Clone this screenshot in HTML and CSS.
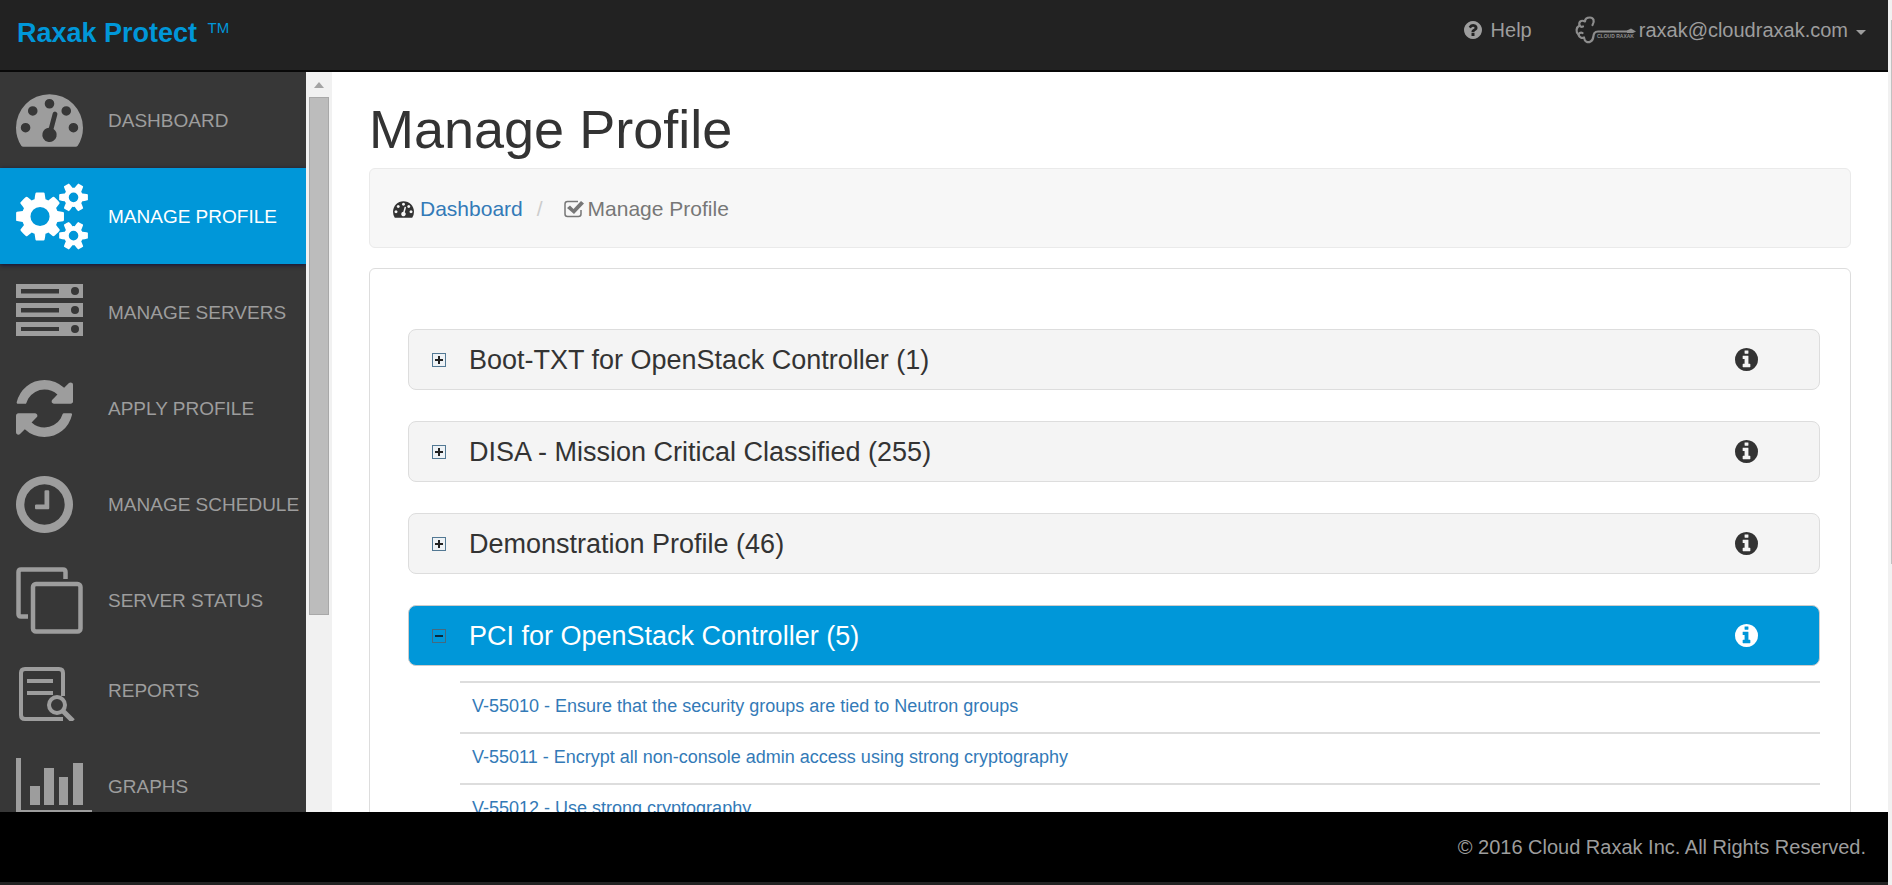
FILE: index.html
```html
<!DOCTYPE html>
<html lang="en">
<head>
<meta charset="utf-8">
<title>Raxak Protect - Manage Profile</title>
<link rel="stylesheet" href="styles.css">
</head>
<body>
<svg class="defs" width="0" height="0" aria-hidden="true">
  <symbol id="i-gauge" viewBox="0 0 1792 1408">
    <path d="M384 896q0-53-37.500-90.500t-90.500-37.500-90.500 37.500-37.500 90.500 37.500 90.500 90.500 37.500 90.500-37.500 37.500-90.500zm192-448q0-53-37.500-90.500t-90.500-37.500-90.500 37.500-37.500 90.500 37.500 90.500 90.500 37.500 90.500-37.500 37.500-90.500zm428 481l101-382q6-26-7.500-48.500t-38.500-29.500-48 6.500-30 39.500l-101 382q-60 5-107 43.500t-63 98.500q-20 77 20 146t117 89 146-20 89-117q16-60-6-117t-72-91zm660-33q0-53-37.500-90.500t-90.500-37.500-90.500 37.500-37.500 90.500 37.500 90.500 90.500 37.500 90.500-37.500 37.500-90.500zm-640-640q0-53-37.500-90.500t-90.500-37.500-90.500 37.500-37.500 90.500 37.500 90.500 90.500 37.500 90.500-37.500 37.500-90.500zm448 192q0-53-37.500-90.500t-90.500-37.500-90.500 37.500-37.500 90.500 37.500 90.500 90.500 37.500 90.500-37.500 37.500-90.500zm320 448q0 261-141 483-19 29-54 29h-1402q-35 0-54-29-141-221-141-483 0-182 71-348t191-286 286-191 348-71 348 71 286 191 191 286 71 348z"/>
  </symbol>
  <symbol id="i-info" viewBox="0 0 1536 1536">
    <path d="M1024 1248v-160q0-14-9-23t-23-9h-96v-512q0-14-9-23t-23-9h-320q-14 0-23 9t-9 23v160q0 14 9 23t23 9h96v320h-96q-14 0-23 9t-9 23v160q0 14 9 23t23 9h448q14 0 23-9t9-23zm-128-896v-160q0-14-9-23t-23-9h-192q-14 0-23 9t-9 23v160q0 14 9 23t23 9h192q14 0 23-9t9-23zm640 416q0 209-103 385.500t-279.500 279.500-385.500 103-385.500-103-279.500-279.500-103-385.500 103-385.500 279.500-279.500 385.500-103 385.500 103 279.500 279.500 103 385.500z"/>
  </symbol>
</svg>
<div class="window">
  <div class="app">
    <header class="topbar">
      <a class="brand" href="#">Raxak Protect <sup>TM</sup></a>
      <nav class="usernav">
        <a class="usernav-link" href="#">
          <svg class="icon-help" viewBox="0 0 1536 1536" aria-hidden="true"><path d="M896 1248v-192q0-14-9-23t-23-9h-192q-14 0-23 9t-9 23v192q0 14 9 23t23 9h192q14 0 23-9t9-23zm256-672q0-88-55.500-163t-138.500-116-170-41q-243 0-371 213-15 24 8 42l132 100q7 6 19 6 16 0 25-12 53-68 86-92 34-24 86-24 48 0 85.500 26t37.500 59q0 38-20 61t-68 45q-63 28-115.500 86.500t-52.500 125.500v36q0 14 9 23t23 9h192q14 0 23-9t9-23q0-19 21.500-49.500t54.500-49.500q32-18 49-28.500t46-35 44.500-48 28-60.500 12.500-81zm384 192q0 209-103 385.500t-279.500 279.500-385.500 103-385.500-103-279.500-279.500-103-385.500 103-385.500 279.500-279.500 385.500-103 385.500 103 279.500 279.500 103 385.500z"/></svg>
          <span>Help</span>
        </a>
        <a class="usernav-link account" href="#">
          <svg class="logo" viewBox="0 0 61 28" aria-hidden="true">
            <g fill="none" stroke="currentColor" stroke-width="2.200" stroke-linecap="round" stroke-linejoin="round">
              <path d="M17.500 9C20 5 18.500 1.500 15 1.500C11.500 1.500 10 3.500 10 5.500C6 3.500 3.500 6 4.500 9.500C1 11.500 .5 16 3.500 18.500C4 21.500 7 22.500 9 21.500C9.500 26 13 27 15.500 25.500C19.500 23.500 17.500 19.500 19.500 17Q20.500 15.500 23 15.500H54"/>
              <path d="M4.500 9.500Q6 11.500 8 10.500M3.500 18.500Q5 16 7.500 17"/>
            </g>
            <path d="M52 14.500L56 12.500L61 15.500L58 17H52Z"/>
            <text class="logo-text" x="22" y="22">CLOUD RAXAK</text>
          </svg>
          <span>raxak@cloudraxak.com</span>
          <i class="caret"></i>
        </a>
      </nav>
    </header>

    <div class="body">
      <nav class="sidebar">
        <a class="side-item" href="#"><span class="side-icon"><svg width="67" height="53"><use href="#i-gauge"/></svg></span>DASHBOARD</a>
        <a class="side-item active" href="#"><span class="side-icon"><svg width="72" height="67" viewBox="0 0 1920 1792"><path d="M896 896q0-106-75-181t-181-75-181 75-75 181 75 181 181 75 181-75 75-181zm768 512q0-52-38-90t-90-38-90 38-38 90q0 53 37.500 90.500t90.500 37.500 90.500-37.500 37.500-90.500zm0-1024q0-52-38-90t-90-38-90 38-38 90q0 53 37.500 90.500t90.500 37.500 90.500-37.500 37.500-90.500zm-384 421v185q0 10-7 19.500t-16 10.500l-155 24q-11 35-32 76 34 48 90 115 7 11 7 20 0 12-7 19-23 30-82.500 89.500t-78.500 59.500q-11 0-21-7l-115-90q-37 19-77 31-11 108-23 155-7 24-30 24h-186q-11 0-20-7.500t-10-17.500l-23-153q-34-10-75-31l-118 89q-7 7-20 7-11 0-21-8-144-133-144-160 0-9 7-19 10-14 41-53t47-61q-23-44-35-82l-152-24q-10-1-17-9.500t-7-19.500v-185q0-10 7-19.500t16-10.500l155-24q11-35 32-76-34-48-90-115-7-11-7-20 0-12 7-20 22-30 82-89t79-59q11 0 21 7l115 90q34-18 77-32 11-108 23-154 7-24 30-24h186q11 0 20 7.500t10 17.500l23 153q34 10 75 31l118-89q8-7 20-7 11 0 21 8 144 133 144 160 0 8-7 19-12 16-42 54t-45 60q23 48 34 82l152 23q10 2 17 10.500t7 19.500zm640 533v140q0 16-149 31-12 27-30 52 51 113 51 138 0 4-4 7-122 71-124 71-8 0-46-47t-52-68q-20 2-30 2t-30-2q-14 21-52 68t-46 47q-2 0-124-71-4-3-4-7 0-25 51-138-18-25-30-52-149-15-149-31v-140q0-16 149-31 13-29 30-52-51-113-51-138 0-4 4-7 4-2 35-20t59-34 30-16q8 0 46 46.500t52 67.500q20-2 30-2t30 2q51-71 92-112l6-2q4 0 124 70 4 3 4 7 0 25-51 138 17 23 30 52 149 15 149 31zm0-1024v140q0 16-149 31-12 27-30 52 51 113 51 138 0 4-4 7-122 71-124 71-8 0-46-47t-52-68q-20 2-30 2t-30-2q-14 21-52 68t-46 47q-2 0-124-71-4-3-4-7 0-25 51-138-18-25-30-52-149-15-149-31v-140q0-16 149-31 13-29 30-52-51-113-51-138 0-4 4-7 4-2 35-20t59-34 30-16q8 0 46 46.500t52 67.500q20-2 30-2t30 2q51-71 92-112l6-2q4 0 124 70 4 3 4 7 0 25-51 138 17 23 30 52 149 15 149 31z"/></svg></span>MANAGE PROFILE</a>
        <a class="side-item" href="#"><span class="side-icon"><svg width="67" height="58" viewBox="0 0 67 58"><path fill-rule="evenodd" d="M0 0H67V14H0ZM5 5V9.500H43V5ZM63 7A4 4 0 1 0 55 7A4 4 0 1 0 63 7ZM0 19H67V33H0ZM5 24V28.500H43V24ZM63 26A4 4 0 1 0 55 26A4 4 0 1 0 63 26ZM0 38H67V52H0ZM5 43V47H43V43ZM63 45A4 4 0 1 0 55 45A4 4 0 1 0 63 45Z"/></svg></span>MANAGE SERVERS</a>
        <a class="side-item" href="#"><span class="side-icon"><svg width="57" height="57" viewBox="0 0 1536 1536"><path d="M1511 928q0 5-1 7-64 268-268 434.500t-478 166.500q-146 0-282.500-55t-243.500-157l-129 129q-19 19-45 19t-45-19-19-45v-448q0-26 19-45t45-19h448q26 0 45 19t19 45-19 45l-137 137q71 66 161 102t187 36q134 0 250-65t186-179q11-17 53-117 8-23 30-23h192q13 0 22.500 9.500t9.500 22.500zm25-800v448q0 26-19 45t-45 19h-448q-26 0-45-19t-19-45 19-45l138-138q-148-137-349-137-134 0-250 65t-186 179q-11 17-53 117-8 23-30 23h-199q-13 0-22.500-9.500t-9.500-22.500v-7q65-268 270-434.500t480-166.500q146 0 284 55.500t245 156.500l130-129q19-19 45-19t45 19 19 45z"/></svg></span>APPLY PROFILE</a>
        <a class="side-item" href="#"><span class="side-icon"><svg width="57" height="57" viewBox="0 0 1536 1536"><path d="M896 416v448q0 14-9 23t-23 9h-320q-14 0-23-9t-9-23v-64q0-14 9-23t23-9h224v-352q0-14 9-23t23-9h64q14 0 23 9t9 23zm416 352q0-148-73-273t-198-198-273-73-273 73-198 198-73 273 73 273 198 198 273 73 273-73 198-198 73-273zm224 0q0 209-103 385.500t-279.500 279.500-385.500 103-385.500-103-279.500-279.500-103-385.500 103-385.500 279.500-279.500 385.500-103 385.500 103 279.500 279.500 103 385.500z"/></svg></span>MANAGE SCHEDULE</a>
        <a class="side-item" href="#"><span class="side-icon"><svg class="outline" width="67" height="67" viewBox="0 0 67 67" stroke-width="4.500"><rect x="17" y="17" width="47.500" height="47.500" rx="3"/><path d="M49.500 12V5Q49.500 2.500 47 2.500H5Q2.500 2.500 2.500 5V47Q2.500 49.500 5 49.500H12"/></svg></span>SERVER STATUS</a>
        <a class="side-item short" href="#"><span class="side-icon"><svg class="outline" width="60" height="60" viewBox="0 0 60 60" stroke-width="4"><path d="M47 35V12Q47 8 43 8H9Q5 8 5 12V54Q5 58 9 58H47M11 20H37M11 32H37"/><circle cx="41" cy="44" r="8"/><path d="M46 49L57 60" stroke-width="5"/></svg></span>REPORTS</a>
        <a class="side-item" href="#"><span class="side-icon"><svg width="76" height="57" viewBox="0 0 76 57"><path d="M0 0H5V52H76V57H0ZM14 28H24V47H14ZM28 10H38V47H28ZM43 19H52V47H43ZM57 5H67V47H57Z"/></svg></span>GRAPHS</a>
      </nav>
      <div class="scrollbar"><span class="arrow-up"></span><span class="thumb"></span></div>

      <main class="content">
        <h1>Manage Profile</h1>
        <ol class="breadcrumb">
          <li><svg class="crumb-gauge" aria-hidden="true"><use href="#i-gauge"/></svg><a href="#">Dashboard</a></li>
          <li class="sep">/</li>
          <li class="current"><svg class="crumb-check" viewBox="0 0 20 18" aria-hidden="true"><path d="M17 10V14Q17 16.500 14.500 16.500H3.500Q1 16.500 1 14V4Q1 1.500 3.500 1.500H14" fill="none" stroke="currentColor" stroke-width="1.500"/><path d="M3 8L6 5.500L9.500 9L17 1L20 3.500L10 14Z"/></svg>Manage Profile</li>
        </ol>
        <section class="panel">
          <div class="profile"><button class="toggle" aria-label="Expand"></button><h2>Boot-TXT for OpenStack Controller (1)</h2><svg class="info"><use href="#i-info"/></svg></div>
          <div class="profile"><button class="toggle" aria-label="Expand"></button><h2>DISA - Mission Critical Classified (255)</h2><svg class="info"><use href="#i-info"/></svg></div>
          <div class="profile"><button class="toggle" aria-label="Expand"></button><h2>Demonstration Profile (46)</h2><svg class="info"><use href="#i-info"/></svg></div>
          <div class="profile open"><button class="toggle" aria-label="Collapse"></button><h2>PCI for OpenStack Controller (5)</h2><svg class="info"><use href="#i-info"/></svg></div>
          <ul class="rules">
            <li><a href="#">V-55010 - Ensure that the security groups are tied to Neutron groups</a></li>
            <li><a href="#">V-55011 - Encrypt all non-console admin access using strong cryptography</a></li>
            <li><a href="#">V-55012 - Use strong cryptography</a></li>
          </ul>
        </section>
      </main>
    </div>

    <footer class="footer">© 2016 Cloud Raxak Inc. All Rights Reserved.</footer>
  </div>
  <div class="page-scroll"><span class="page-thumb"></span></div>
</div>
</body>
</html>
```
FILE: styles.css
```css
* { box-sizing: border-box; }
body {
  margin: 0;
  font-family: "Liberation Sans", Arial, sans-serif;
  color: #333;
  background: #fff;
}
a { color: #337ab7; text-decoration: none; }
svg { fill: currentColor; display: block; flex: none; }
.outline { fill: none; stroke: currentColor; }
.defs { position: absolute; }

.window { display: flex; height: 100vh; overflow: hidden; }
.app { flex: 1; min-width: 0; display: flex; flex-direction: column; }

.topbar {
  flex: none;
  height: 72px;
  padding: 0 22px 0 17px;
  display: flex;
  justify-content: space-between;
  background: #222;
  border-bottom: 2px solid #080808;
}
.brand {
  padding-top: 17px;
  font-size: 27px;
  line-height: 32px;
  font-weight: bold;
  color: #0097d9;
}
.brand sup {
  margin-left: 3px;
  font-size: 15px;
  line-height: 0;
  font-weight: normal;
  vertical-align: 9px;
}
.usernav { display: flex; align-items: center; gap: 43px; height: 60px; }
.usernav-link { display: flex; align-items: center; color: #9d9d9d; font-size: 20px; line-height: 30px; }
.icon-help { width: 18px; height: 18px; margin-right: 9px; }
.logo { width: 61px; height: 28px; margin-right: 3px; color: #8d8d8d; }
.logo-text { font-size: 5px; font-weight: bold; }
.caret {
  margin: 4px 0 0 8px;
  border: 5px solid transparent;
  border-top-color: currentColor;
  border-bottom: 0;
}

.body { flex: 1; min-height: 0; display: flex; }
.sidebar { width: 306px; flex: none; overflow: hidden; background: #373737; }
.side-item {
  display: flex;
  align-items: center;
  height: 96px;
  padding: 1px 0 0 16px;
  color: #9d9d9d;
  font-size: 19px;
  line-height: 30px;
  white-space: nowrap;
}
.side-item.active { background: #0097d9; color: #fff; box-shadow: 0 1px 4px #11113a; }
.side-item.short { height: 90px; padding-bottom: 6px; }
.side-icon { width: 92px; flex: none; }

.scrollbar {
  width: 26px;
  flex: none;
  display: flex;
  flex-direction: column;
  align-items: center;
  background: #f1f1f1;
  z-index: 1;
}
.arrow-up { margin: 10px 0 9px; border: 5px solid transparent; border-bottom: 6px solid #a3a3a3; border-top: 0; }
.thumb { width: 20px; height: 518px; background: #bcbcbc; border: 1px solid #a8a8a8; }

.content { flex: 1; min-width: 0; overflow: hidden; padding: 27px 37px 0; }
h1 { margin: 0 0 9px; font-size: 54px; line-height: 60px; font-weight: normal; }
.breadcrumb {
  margin: 0 0 20px;
  padding: 25px 23px 23px;
  display: flex;
  list-style: none;
  font-size: 21px;
  line-height: 30px;
  background: #f7f7f7;
  border: 1px solid #eaeaea;
  border-radius: 6px;
}
.breadcrumb li { display: flex; align-items: center; }
.crumb-gauge { width: 21px; height: 17px; margin-right: 6px; }
.crumb-check { width: 20px; height: 18px; margin-right: 4px; }
.breadcrumb .sep { padding: 0 21px 0 14px; color: #ccc; }
.breadcrumb .current { color: #777; }

.panel {
  padding: 60px 30px 0 38px;
  display: flex;
  flex-direction: column;
  gap: 31px;
  border: 1px solid #ddd;
  border-radius: 6px;
}
.profile {
  display: flex;
  align-items: center;
  height: 61px;
  padding: 0 61px 0 23px;
  background: #f4f4f4;
  border: 1px solid #ddd;
  border-radius: 8px;
}
.profile h2 { flex: 1; margin: 0; font-size: 27px; line-height: 32px; font-weight: normal; }
.toggle {
  width: 14px;
  height: 14px;
  margin-right: 23px;
  padding: 0;
  border: 1px solid #527893;
  background:
    linear-gradient(#222, #222) center / 8px 2px no-repeat,
    linear-gradient(#222, #222) center / 2px 8px no-repeat,
    #eef2f5;
}
.info { width: 23px; height: 23px; }
.profile.open { background: #0097d9; color: #fff; border-color: #ccc; }
.open .toggle { border-color: #456a80; background: linear-gradient(#0a2a3c, #0a2a3c) center / 8px 2px no-repeat; }

.rules { margin: -16px 0 0 52px; padding: 0; list-style: none; }
.rules li { height: 51px; padding: 8px 12px; border-top: 2px solid #ddd; font-size: 18px; line-height: 30px; }

.footer {
  flex: none;
  height: 73px;
  padding: 20px 22px;
  text-align: right;
  font-size: 20px;
  line-height: 30px;
  color: #9d9d9d;
  background: #000;
  border-bottom: 3px solid #222;
}

.page-scroll { width: 4px; flex: none; padding: 20px 0 0 3px; background: #f1f1f1; }
.page-thumb { display: block; height: 544px; background: #c1c1c1; }
```
